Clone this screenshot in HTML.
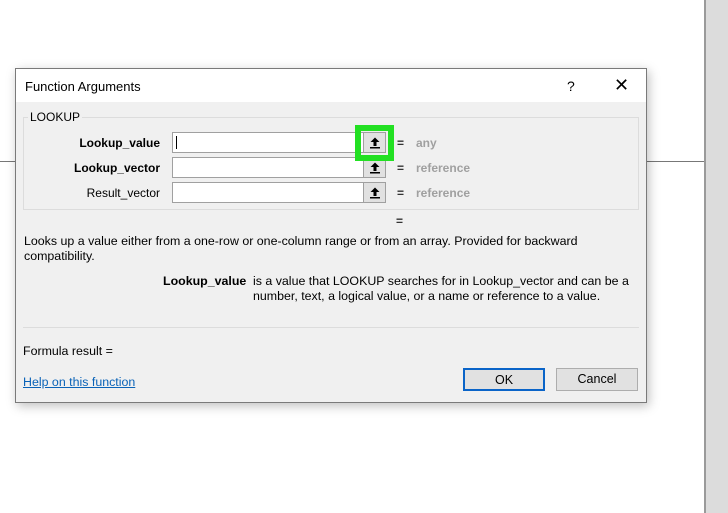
<!DOCTYPE html>
<html><head><meta charset="utf-8"><style>
*{margin:0;padding:0;box-sizing:border-box}
body{width:728px;height:513px;background:#fff;position:relative;overflow:hidden;font-family:"Liberation Sans",sans-serif;font-size:12px;color:#000}
.a{position:absolute;white-space:nowrap}
.dlg{position:absolute;left:15px;top:68px;width:632px;height:335px;background:#f0f0f0;border:1px solid #7a7a7a;box-shadow:2px 3px 10px rgba(0,0,0,.25)}
.tb{position:absolute;left:0;top:0;width:630px;height:33px;background:#fff}
.inp{position:absolute;left:156px;width:214px;height:21px;background:#fff;border:1px solid #a0a0a0}
.btn{position:absolute;right:0;top:0;width:22px;height:19px;background:#e1e1e1;border-left:1px solid #a0a0a0;}
.btn svg{position:absolute;left:5px;top:3px}
.lbl{position:absolute;right:486px;font-weight:bold}
.eq{position:absolute;left:381px;font-weight:bold;color:#333}
.gr{position:absolute;left:400px;font-weight:bold;color:#a0a0a0}
.pb{position:absolute;border:1px solid #adadad;background:#e1e1e1;width:82px;height:23px;text-align:center;line-height:21px;font-size:12.5px}
</style></head><body>
<div class="a" style="left:0;top:161px;width:15px;height:1px;background:#777"></div>
<div class="a" style="left:647px;top:161px;width:58px;height:1px;background:#777"></div>
<div class="a" style="left:704px;top:0;width:2px;height:513px;background:#9a9a9a"></div>
<div class="a" style="left:706px;top:0;width:22px;height:513px;background:#dcdcdc"></div>
<div class="dlg">
<div class="tb"></div>
<div class="a" style="left:9px;top:10px;font-size:13px">Function Arguments</div>
<div class="a" style="left:551px;top:9px;font-size:14px">?</div>
<div class="a" style="left:598px;top:6px;font-size:18px">✕</div>
<div class="a" style="left:7px;top:48px;width:616px;height:93px;border:1px solid #dcdcdc"></div>
<div class="a" style="left:12px;top:41px;background:#f0f0f0;padding:0 2px;font-size:12px">LOOKUP</div>
<div class="lbl" style="top:67px">Lookup_value</div>
<div class="lbl" style="top:92px">Lookup_vector</div>
<div class="lbl" style="top:117px;font-weight:normal">Result_vector</div>
<div class="inp" style="top:63px"><div class="a" style="left:3px;top:3px;width:1px;height:13px;background:#000"></div><div class="btn"><svg width="12" height="13" viewBox="0 0 12 13"><path d="M6 1.5L1.5 6H4.5V10H7.5V6H10.5Z" fill="#000"/><rect x="1" y="11" width="10" height="1.5" fill="#000"/></svg></div></div>
<div class="inp" style="top:88px"><div class="btn"><svg width="12" height="13" viewBox="0 0 12 13"><path d="M6 1.5L1.5 6H4.5V10H7.5V6H10.5Z" fill="#000"/><rect x="1" y="11" width="10" height="1.5" fill="#000"/></svg></div></div>
<div class="inp" style="top:113px"><div class="btn"><svg width="12" height="13" viewBox="0 0 12 13"><path d="M6 1.5L1.5 6H4.5V10H7.5V6H10.5Z" fill="#000"/><rect x="1" y="11" width="10" height="1.5" fill="#000"/></svg></div></div>
<div class="a" style="left:339px;top:56px;width:39px;height:36px;border:6px solid #22e022"></div>
<div class="eq" style="top:67px">=</div><div class="gr" style="top:67px">any</div>
<div class="eq" style="top:92px">=</div><div class="gr" style="top:92px">reference</div>
<div class="eq" style="top:117px">=</div><div class="gr" style="top:117px">reference</div>
<div class="eq" style="top:145px;left:380px">=</div>
<div class="a" style="left:8px;top:165px;font-size:12.4px;line-height:15px">Looks up a value either from a one-row or one-column range or from an array. Provided for backward<br>compatibility.</div>
<div class="a" style="left:147px;top:205px;font-weight:bold;font-size:12.4px">Lookup_value</div>
<div class="a" style="left:237px;top:205px;font-size:12.4px;line-height:15px">is a value that LOOKUP searches for in Lookup_vector and can be a<br>number, text, a logical value, or a name or reference to a value.</div>
<div class="a" style="left:7px;top:258px;width:616px;height:1px;background:#dcdcdc"></div>
<div class="a" style="left:7px;top:275px;font-size:12.4px">Formula result =</div>
<div class="a" style="left:7px;top:306px;font-size:12.4px;color:#0a63b8;text-decoration:underline">Help on this function</div>
<div class="pb" style="left:447px;top:299px;border:2px solid #0a64c8">OK</div>
<div class="pb" style="left:540px;top:299px">Cancel</div>
</div>
</body></html>
